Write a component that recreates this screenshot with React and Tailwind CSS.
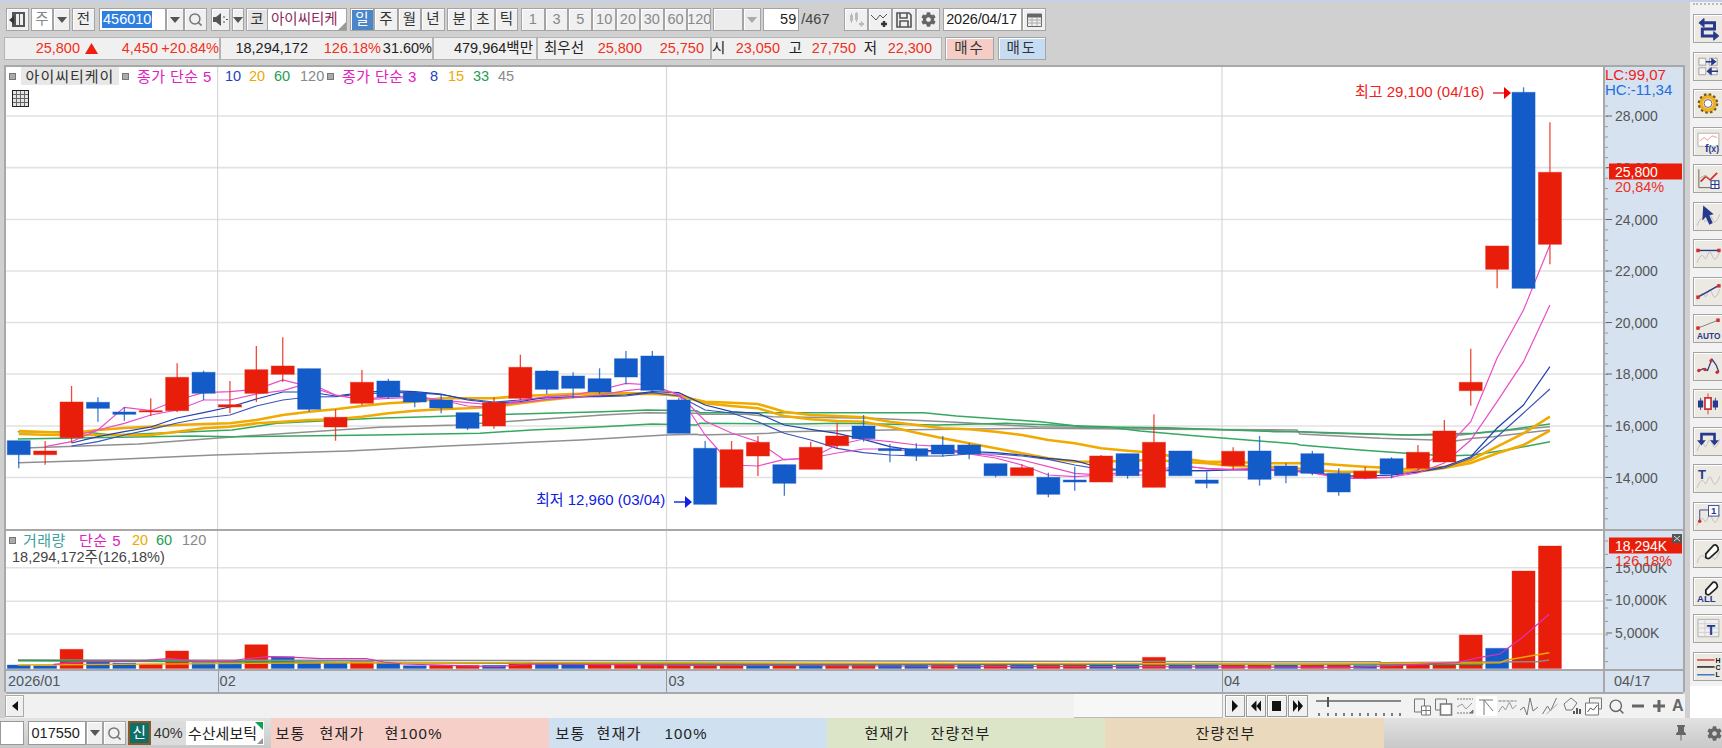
import { Search } from "lucide-react"
import { FaCog } from "react-icons/fa"
import { BsPinFill } from "react-icons/bs"

const RED = "#e81e0a"
const BLUE = "#125bc8"
const cx = (i) => 18.75 + i * 26.4

// [bodyTop, bodyBottom, wickTop, wickBottom, up]
const candles = [
  [440.7, 454.7, 440.7, 468.3, 0], [451, 454.7, 441, 464.7, 1], [402, 437.7, 386, 442.7, 1], [402.3, 408.3, 397.3, 421.7, 0],
  [412, 414.3, 407.3, 420.7, 0], [410.7, 412, 398.3, 416, 1], [377.3, 410.7, 363.3, 412, 1], [372.3, 393.3, 370.7, 400, 0],
  [404.7, 407, 381, 413.3, 1], [369.7, 393.3, 346, 402, 1], [366, 374.3, 337.3, 382, 1], [368.7, 409.3, 368.7, 411.7, 0],
  [417.3, 427, 409.3, 440.7, 1], [382.3, 403.3, 370, 405.3, 1], [381, 397, 378.7, 398.7, 0], [393, 402, 391.3, 407.3, 0],
  [400, 408, 395, 413.3, 0], [412.7, 428.3, 412.7, 430, 0], [402.7, 426, 397.3, 428.7, 1], [367.3, 398.3, 354.7, 400, 1],
  [371, 389.3, 370, 394, 0], [376, 388.3, 372.3, 398.3, 0], [378.7, 392, 368.3, 394, 0], [358.7, 377, 351, 384.3, 0],
  [356, 390.3, 351, 391.7, 0], [400, 433.3, 398, 433.3, 0], [448.3, 504.3, 441, 504.3, 0], [449.7, 487.3, 441, 487.3, 1],
  [442.3, 456, 436, 476, 1], [464.7, 483.3, 464.7, 495.7, 0], [447.3, 469.3, 441.7, 469.3, 1], [436, 445.7, 423.3, 449.3, 1],
  [426, 438.7, 415, 441.7, 0], [448.7, 450.7, 444, 462.3, 0], [448.7, 455.7, 443.3, 461, 0], [445, 454, 436, 456.7, 0],
  [445, 454, 443, 459.3, 0], [463.7, 475.7, 463.7, 477.3, 0], [467.7, 475.7, 464.3, 475.7, 1], [477.3, 494.3, 472.7, 497.3, 0],
  [480, 482, 466.7, 490.7, 0], [456, 482, 455, 482, 1], [453.7, 475.7, 453.7, 478.7, 0], [442.3, 487.3, 414.3, 487.3, 1],
  [451, 475.7, 451, 475.7, 0], [480, 483.3, 471.7, 488.3, 0], [451.3, 465.7, 447.3, 470, 1], [451, 479.3, 436, 485.7, 0],
  [466, 475.7, 463.3, 483.3, 0], [453.7, 473.3, 451, 475.3, 0], [473.3, 492, 468.3, 495.7, 0], [471.3, 478, 466.7, 479.3, 1],
  [458.7, 474, 457.3, 478.3, 0], [452.3, 468.3, 445, 470, 1], [431, 462, 420, 462, 1], [382.3, 390.7, 348.7, 405.7, 1],
  [246, 269.3, 246, 288.3, 1], [92.3, 288.3, 87.3, 288.3, 0], [172.3, 244.3, 122.3, 264.3, 1],
]

// [top, up]
const volumes = [
  [665, 0], [665.7, 0], [649.3, 1], [662, 0], [663, 0], [664, 1], [651, 1], [662.7, 0], [662.7, 0], [644.7, 1],
  [656.7, 0], [662, 0], [663, 0], [661.7, 1], [663.3, 0], [665.7, 0], [665.3, 1], [665.3, 1], [665.3, 0], [662, 1],
  [664, 0], [664, 0], [664, 1], [664, 1], [664, 1], [663, 1], [664, 1], [664, 1], [664, 0], [665, 1],
  [664, 0], [665, 1], [664, 1], [665, 0], [664, 0], [664, 1], [664, 0], [665, 1], [664, 0], [664, 1],
  [664, 1], [664, 0], [664.5, 0], [657.3, 1], [664, 0], [664, 0], [664.5, 1], [664.5, 1], [664.5, 0], [664.5, 1],
  [664.5, 1], [665.5, 0], [664.5, 1], [664.5, 1], [664.5, 1], [635, 1], [648.3, 0], [571, 1], [546, 1],
]

const fastPink = [446.7, 441.7, 430, 407.3, 410.7, 400, 392.7, 391.7, 389.3, 380, 386.7, 395, 399.3, 396.7, 396, 400, 406, 407.3, 400, 396.7, 395, 390, 383.3, 385, 395, 435, 465, 466, 459.3, 458, 445, 439, 441.7, 445, 446.7, 454, 458, 465, 475, 476.7, 475, 471.7, 470, 466, 468.3, 469.3, 468, 470, 471.7, 478.3, 478.3, 477.3, 470, 450, 421.7, 358, 310, 245]
const slowPink = [436.7, 430, 423.3, 415, 410, 400, 400, 394, 390.7, 383, 395, 400, 398.3, 397.3, 400, 402.7, 405, 402.7, 399.3, 397.3, 395, 390.7, 388, 394, 421, 433, 441.7, 460, 458, 453, 449, 449, 451.7, 451.7, 453, 456, 460, 466.7, 473.3, 475, 475, 475, 465, 469, 470, 470, 471, 473, 478, 478, 477, 473, 463, 440, 401.7, 361.7, 305]
const fastBlue = [443, 436.7, 431.7, 427, 418, 412.7, 407, 399, 392, 392, 396, 392.7, 390.7, 391.7, 394, 400, 403, 401.7, 397, 397, 396, 395, 391.7, 392.7, 405, 411.7, 413.3, 425, 429.3, 433.3, 439.3, 446.7, 450.7, 450.7, 451.7, 452.7, 455, 458.3, 460.7, 468, 470, 470, 470.7, 470.7, 469.3, 469.3, 470, 472, 476, 476, 475, 472, 466.7, 456.7, 428, 405, 366.7]
const slowBlue = [446, 441.7, 435, 429.3, 423, 418, 415, 406, 400, 397, 396.7, 394, 392.7, 392.7, 394.7, 399, 402, 400, 398, 397, 396.7, 396, 392.7, 396, 410, 413, 421.7, 433.3, 440, 448.3, 452.7, 455, 456, 456, 454, 454, 456, 459.3, 465, 469.3, 470.7, 470.7, 470.7, 470.7, 470, 470, 470, 473, 476, 476, 475, 472, 468, 458, 436.7, 413, 389]
const orangeUp = [431, 432, 433, 430, 428, 426.7, 425, 424, 423.3, 420, 415, 411.7, 409.3, 406, 403.3, 401.7, 398.3, 398.3, 398.3, 396, 395, 394, 393.3, 393.3, 393.3, 396, 401.7, 402.7, 404, 411.7, 415, 416, 417.3, 421.7, 425, 428.3, 429.3, 431.7, 435, 440, 443.3, 448.3, 450.7, 452.7, 458.3, 461.7, 461.7, 463.3, 463.3, 463, 465, 466.7, 468, 470, 466.7, 460, 446.7, 433.3, 416.7]
const orangeLow = [434, 434.7, 435, 435, 435, 435, 431.7, 428.3, 426.7, 423.3, 421.7, 420, 419.3, 416.7, 413.3, 410.7, 409.3, 408.3, 406.7, 403.3, 400, 397.3, 395, 394, 394, 395, 403.3, 406, 408.3, 416, 419.3, 421, 421.7, 426.7, 432.7, 438.3, 443.3, 448.3, 453.3, 458.3, 461.7, 461.7, 460.7, 460, 461.7, 463.3, 466, 466.7, 467.3, 470, 471.7, 471.7, 471.7, 471.7, 468, 463, 453.3, 445, 430.7]

const series = (arr, start) => arr.map((y, i) => `${cx(i + start).toFixed(1)},${y}`).join(" ")

const zoomA = (pts) => pts.map(([x, y]) => `${(x / 2.24).toFixed(1)},${(320 + y / 3).toFixed(1)}`).join(" ")
const zoomB = (pts) => pts.map(([x, y]) => `${(700 + x / 2.613).toFixed(1)},${(380 + y / 3).toFixed(1)}`).join(" ")
const zoomC = (pts) => pts.map(([x, y]) => `${(1300 + x / 3).toFixed(1)},${(290 + y / 3).toFixed(1)}`).join(" ")
const volA = (pts) => pts.map(([x, y]) => `${(x / 2.24).toFixed(1)},${(520 + y / 3).toFixed(1)}`).join(" ")
const volC = (pts) => pts.map(([x, y]) => `${(1300 + x / 3).toFixed(1)},${(520 + y / 3).toFixed(1)}`).join(" ")

const green1 = [
  zoomA([[40, 335], [187, 335], [250, 345], [350, 340], [520, 330], [620, 310], [840, 295], [960, 290], [1140, 283], [1350, 275], [1450, 270], [1560, 272]]),
  zoomB([[0, 98], [585, 98], [670, 108], [890, 125], [1000, 140], [1220, 143], [1500, 155]]),
  zoomC([[0, 425], [320, 435], [520, 430], [620, 420], [750, 402]]),
].join(" ")
const green2 = [
  zoomA([[40, 357], [430, 348], [520, 350], [840, 345], [1075, 340], [1190, 330], [1350, 320], [1460, 312], [1560, 315]]),
  zoomB([[0, 130], [260, 132], [360, 130], [620, 135], [800, 130], [1060, 140], [1150, 153], [1300, 168], [1560, 192]]),
  zoomC([[0, 465], [180, 480], [320, 490], [440, 498], [520, 495], [620, 480], [750, 455]]),
].join(" ")
const gray1 = [
  zoomA([[40, 385], [310, 372], [550, 348], [850, 322], [1020, 315], [1130, 305], [1350, 285], [1450, 278], [1560, 280]]),
  zoomB([[0, 103], [120, 103], [190, 110], [450, 115], [670, 127], [880, 140], [1200, 145], [1500, 152]]),
  zoomC([[0, 425], [80, 430], [320, 435], [480, 435], [580, 425], [750, 410]]),
].join(" ")
const gray2 = [
  zoomA([[40, 428], [190, 422], [480, 405], [780, 393], [1000, 378], [1300, 360], [1490, 345], [1560, 343]]),
  zoomB([[0, 165], [180, 160], [220, 155], [490, 150], [880, 145], [1200, 148], [1560, 150]]),
  zoomC([[0, 432], [240, 445], [470, 452], [520, 445], [580, 440], [750, 420]]),
].join(" ")

const priceGrid = [116, 167.6, 219.5, 271, 322.5, 374, 426, 477.5]
const volumeGrid = [567.7, 601.3, 634]
const monthLines = [217.6, 666.5, 1222]

const Btn = ({ className = "", tone = "bg-[#f0f0f0] text-[#333]", children }) => (
  <div className={`flex items-center justify-center shrink-0 h-full border border-[#a4a4a4] shadow-[inset_1px_1px_0_#fff] overflow-hidden ${tone} ${className}`}>
    {children}
  </div>
)

const Arrow = ({ color = "#555" }) => (
  <svg width="10" height="6" viewBox="0 0 10 6"><path d="M0 0h10L5 6z" fill={color} /></svg>
)

const Gap = ({ className }) => <div className={`shrink-0 ${className}`} />

const Sq = ({ className = "" }) => <span className={`shrink-0 w-[7px] h-[7px] bg-[#aaa] border border-[#777] ${className}`} />

const Price = ({ className = "", children }) => (
  <span className={`shrink-0 text-right whitespace-nowrap ${className}`}>{children}</span>
)

const Segment = ({ className = "", children }) => (
  <div className={`flex items-center shrink-0 h-full bg-[#f0f0f0] border border-[#b4b4b4] ${className}`}>{children}</div>
)

const Wave = () => <path d="M2 25 C6 14 9 16 11 20 S15 8 18 14 S22 27 28 12" fill="none" stroke="#b8b8b8" />

const navy = "#26398c"

const sideIcons = [
  <g key="0" fill="none" stroke={navy} strokeWidth="3.4"><path d="M10 8h12v7H8v8h14" /><path d="M10 3l-6 5 6 5z" fill={navy} strokeWidth="1" /><path d="M21 18l6 5-6 5z" fill={navy} strokeWidth="1" /></g>,
  <g key="1"><path d="M4 5h8v8H4zM4 16h8v8H4zM16 5h9v8h-9zM16 16h9v8h-9z" fill="#f4f4f4" stroke="#999" /><path d="M12 9h10M19 6l4 3-4 3z" stroke={navy} strokeWidth="1.6" fill={navy} /><path d="M26 20H15M18 17l-4 3 4 3z" stroke={navy} strokeWidth="1.6" fill={navy} /></g>,
  <g key="2"><circle cx="14.5" cy="14.5" r="8" fill="none" stroke="#f0b020" strokeWidth="4.4" /><circle cx="14.5" cy="14.5" r="10.6" fill="none" stroke="#6a5a20" strokeWidth="2.4" strokeDasharray="3 2.6" /><circle cx="14.5" cy="14.5" r="4.5" fill="#fff" stroke="#555" /></g>,
  <g key="3"><path d="M3 5h24v15H3z" fill="#fff" stroke="#aaa" /><path d="M5 14l5-4 4 3 5-5 6 2" fill="none" stroke="#e88" /><text x="11" y="26" className="text-[12px] fill-[#26398c] font-bold">f</text><text x="15" y="26" className="text-[10px] fill-[#26398c] font-bold">(x)</text></g>,
  <g key="4"><path d="M4 4v21h24" fill="none" stroke="#555" /><path d="M6 18l6-6 5 4 8-8" fill="none" stroke="#d03030" strokeWidth="2" /><path d="M5 14l6-3 6 4" fill="none" stroke="#aaa" /><path d="M18 17h9v9h-9zM22.5 17v9M18 21.5h9" fill="#fff" stroke={navy} strokeWidth="1.2" /></g>,
  <g key="5"><Wave /><path d="M9 2l12 10-5 1 4 9-4 2-4-9-4 4z" fill={navy} /></g>,
  <g key="6"><Wave /><path d="M3 11h23" stroke={navy} strokeWidth="1.6" /><rect x="1" y="9" width="4" height="4" fill="#d03030" /><rect x="25" y="9" width="4" height="4" fill="#d03030" /></g>,
  <g key="7"><Wave /><path d="M3 21L26 8" stroke={navy} strokeWidth="1.6" /><rect x="1" y="19" width="4" height="4" fill="#d03030" /><rect x="25" y="6" width="4" height="4" fill="#d03030" /></g>,
  <g key="8"><path d="M3 14L26 5" stroke="#777" /><rect x="1" y="12" width="4" height="4" fill="#d03030" /><rect x="24" y="3" width="4" height="4" fill="#d03030" /><text x="2" y="27" className="text-[9.5px] fill-[#26398c] font-bold">AUTO</text></g>,
  <g key="9"><path d="M3 20l6-3 5 2 5-13 5 7 3 8" fill="none" stroke={navy} strokeWidth="1.4" /><g fill="#d03030"><circle cx="4" cy="19" r="2" /><circle cx="11" cy="18" r="2" /><circle cx="18" cy="8" r="2" /><circle cx="25" cy="21" r="2" /></g></g>,
  <g key="10"><path d="M6 8v14M23 8v14" stroke={navy} /><path d="M3 11h6v8H3zM20 11h6v8h-6z" fill={navy} /><path d="M14.5 3v24" stroke="#d03030" /><path d="M11 8h7v13h-7z" fill="#fff" stroke="#d03030" strokeWidth="2" /></g>,
  <g key="11"><Wave /><path d="M7 14V6h15v8" fill="none" stroke={navy} strokeWidth="3" /><path d="M2 13h10l-5 6zM17 13h10l-5 6z" fill={navy} /></g>,
  <g key="12"><Wave /><text x="3" y="15" className="text-[15px] fill-[#26398c] font-bold">T</text></g>,
  <g key="13"><Wave /><path d="M5 19V7h10" fill="none" stroke={navy} /><circle cx="5" cy="20" r="2" fill="#d03030" /><rect x="15" y="2" width="12" height="12" fill="#fff" stroke={navy} /><text x="18" y="12" className="text-[11px] fill-[#26398c] font-bold">1</text></g>,
  <g key="14"><Wave /><path d="M12 15l9-10q2-1 4 1l1 2q1 2-1 4l-9 8q-2 1-4-1z" fill="#fff" stroke="#222" strokeWidth="2" /></g>,
  <g key="15"><path d="M12 13l8-9q2-1 4 1l1 2q1 2-1 4l-8 7q-2 1-4-1z" fill="#fff" stroke="#222" strokeWidth="2" /><text x="2" y="27" className="text-[11px] fill-[#26398c] font-bold">ALL</text></g>,
  <g key="16"><path d="M3 4h24v20H3z" fill="#f0f0f0" stroke="#aaa" /><path d="M3 9h24M3 14h24M3 19h24M11 4v20" stroke="#ccc" /><text x="13" y="22" className="text-[16px] fill-[#26398c] font-bold">T</text></g>,
  <g key="17"><path d="M2 7h20" stroke="#d03030" strokeWidth="1.6" /><path d="M2 15h20" stroke="#111" strokeWidth="1.6" /><path d="M2 24h20" stroke="#3070d0" strokeWidth="1.6" /><text x="23" y="10" className="text-[8px] fill-[#111] font-bold">H</text><text x="23" y="18" className="text-[8px] fill-[#111] font-bold">C</text><text x="23" y="27" className="text-[8px] fill-[#111] font-bold">L</text></g>,
]

const PlotLine = ({ points, stroke, width = 1.2 }) => (
  <polyline points={points} fill="none" stroke={stroke} strokeWidth={width} />
)

const GridLines = ({ rows, x2 = 1603 }) => (
  <g stroke="#e2e2e2" strokeWidth="1.6">
    {rows.map((y) => <line key={y} x1="6" x2={x2} y1={y} y2={y} />)}
  </g>
)

const MonthLines = ({ top, bottom }) => (
  <g stroke="#d8d8d8" strokeWidth="1.2">
    {monthLines.map((x) => <line key={x} x1={x} x2={x} y1={top} y2={bottom} />)}
  </g>
)

const MainPlot = () => (
  <svg className="block w-[1597px] h-[462px]" viewBox="6 67 1597 462">
    <GridLines rows={priceGrid} />
    <MonthLines top={67} bottom={529} />
    <PlotLine points={gray2} stroke="#909090" width={1.5} />
    <PlotLine points={gray1} stroke="#909090" width={1.5} />
    <PlotLine points={green2} stroke="#35a860" width={1.5} />
    <PlotLine points={green1} stroke="#35a860" width={1.5} />
    <PlotLine points={series(orangeLow, 0)} stroke="#f0aa00" width={2.6} />
    <PlotLine points={series(orangeUp, 0)} stroke="#f0aa00" width={2.6} />
    <PlotLine points={series(slowBlue, 2)} stroke="#3a55b8" />
    <PlotLine points={series(fastBlue, 2)} stroke="#2040b0" />
    <PlotLine points={series(slowPink, 2)} stroke="#ea4cc8" />
    <PlotLine points={series(fastPink, 1)} stroke="#ea4cc8" />
    {candles.map(([top, bottom, wickTop, wickBottom, up], i) => {
      const color = up ? RED : BLUE
      return (
        <g key={i}>
          <line x1={cx(i)} x2={cx(i)} y1={wickTop} y2={wickBottom} stroke={color} strokeOpacity="0.8" strokeWidth="1.3" />
          <rect x={cx(i) - 11.5} y={top} width="23" height={bottom - top} fill={color} stroke={color} strokeOpacity="0.45" />
        </g>
      )
    })}
    <text x="1355" y="97" className="text-[15px] fill-[#f02020]">최고 29,100 (04/16)</text>
    <path d="M1493 93h12" stroke="#f02020" strokeWidth="1.4" />
    <path d="M1504 87l7 6-7 6z" fill="#f00000" />
    <text x="536" y="505" className="text-[15px] fill-[#1020e0]">최저 12,960 (03/04)</text>
    <path d="M674 502h12" stroke="#1020e0" strokeWidth="1.4" />
    <path d="M685 496l7 6-7 6z" fill="#1020e0" />
  </svg>
)

const axisRows = [
  ["28,000", 116], ["26,000", 167.6], ["24,000", 219.5], ["22,000", 271], ["20,000", 322.5], ["18,000", 374], ["16,000", 426], ["14,000", 477.5],
]

const MainAxis = () => {
  const minor = []
  for (let y = 106; y < 529; y += 10.32) minor.push(y)
  return (
    <svg className="block w-[78px] h-[462px]" viewBox="1605 67 78 462">
      <g stroke="#9a9a9a">
        {minor.map((y) => <line key={y} x1="1605" x2="1608" y1={y} y2={y} />)}
      </g>
      {axisRows.map(([label, y]) => (
        <g key={label}>
          <line x1="1606" x2="1612" y1={y} y2={y} stroke="#666" />
          <text x="1615" y={y + 5} className="text-[14px] fill-[#555]">{label}</text>
        </g>
      ))}
      <text x="1605" y="80" className="text-[15px] fill-[#f02020]">LC:99,07</text>
      <text x="1605" y="95" className="text-[15px] fill-[#2070e0]">HC:-11,34</text>
      <rect x="1609" y="163.5" width="73" height="16" fill={RED} />
      <text x="1615" y="176.5" className="text-[14px] fill-white">25,800</text>
      <text x="1615" y="192" className="text-[14.5px] fill-[#f03020]">20,84%</text>
    </svg>
  )
}

const VolumePlot = () => (
  <svg className="block w-[1597px] h-[138px]" viewBox="6 531 1597 138">
    <GridLines rows={volumeGrid} />
    <MonthLines top={531} bottom={669} />
    {volumes.map(([top, up], i) => (
      <rect key={i} x={cx(i) - 11.5} y={top} width="23" height={668.5 - top} fill={up ? RED : BLUE} stroke={up ? RED : BLUE} strokeOpacity="0.35" />
    ))}
    <PlotLine points={volA([[40, 420], [1560, 422]]) + " " + volC([[0, 425], [240, 425], [240, 428], [710, 425], [748, 420]])} stroke="#8a8a8a" width={1.5} />
    <PlotLine points={volA([[40, 422], [1560, 432]]) + " " + volC([[0, 433], [550, 432]])} stroke="#2f9a55" width={1.8} />
    <PlotLine points={volA([[40, 435], [780, 428], [1560, 428]]) + " " + volC([[0, 432], [600, 428], [620, 420], [748, 398]])} stroke="#f0aa00" width={1.4} />
    <PlotLine points={volA([[120, 433], [190, 425], [250, 425], [310, 423], [380, 415], [440, 424], [520, 424], [545, 417], [600, 410], [660, 412], [720, 416], [820, 416], [860, 426], [900, 432], [1030, 437], [1110, 440], [1190, 432], [1560, 436]]) + " " + volC([[160, 442], [470, 428], [540, 412], [600, 402], [670, 350], [710, 315], [748, 282]])} stroke="#e030b0" />
  </svg>
)

const VolumeAxis = () => {
  const minor = []
  for (let y = 541; y < 669; y += 13.4) minor.push(y)
  return (
    <svg className="block w-[78px] h-[138px]" viewBox="1605 531 78 138">
      <g stroke="#9a9a9a">
        {minor.map((y) => <line key={y} x1="1605" x2="1608" y1={y} y2={y} />)}
      </g>
      {[["15,000K", 567.5], ["10,000K", 600], ["5,000K", 633]].map(([label, y]) => (
        <g key={label}>
          <line x1="1606" x2="1612" y1={y} y2={y} stroke="#666" />
          <text x="1615" y={y + 5} className="text-[14px] fill-[#555]">{label}</text>
        </g>
      ))}
      <rect x="1609" y="537.5" width="73" height="16" fill={RED} />
      <text x="1615" y="550.5" className="text-[14px] fill-white">18,294K</text>
      <text x="1615" y="565.5" className="text-[14.5px] fill-[#f03020]">126,18%</text>
      <rect x="1672" y="534" width="10" height="9" fill="#555" />
      <path d="M1674 536l6 5M1680 536l-6 5" stroke="#ddd" />
    </svg>
  )
}

const MiniIcon = ({ children, className = "" }) => (
  <svg width="20" height="20" viewBox="0 0 20 20" className={`shrink-0 ${className}`} fill="none" stroke="#777">{children}</svg>
)

const scrollIcons = [
  <MiniIcon key="0" className="w-[21px]"><path d="M2 3h10v13H2z" /><path d="M9 10h9v9H9zM13.5 10v9M9 14.5h9" fill="#fff" /></MiniIcon>,
  <MiniIcon key="1" className="w-[21px]"><path d="M2 3h11v11H2z" /><path d="M7 8h11v11H7z" fill="#fff" strokeWidth="1.6" /></MiniIcon>,
  <MiniIcon key="2" className="w-[22px]"><path d="M2 3h16M2 17h16" strokeDasharray="2 1" /><path d="M2 11l5-3 4 5 6-6" stroke="#999" /><path d="M18 14l-3 3h3z" fill="#777" /></MiniIcon>,
  <div key="3" className="w-[21px] h-[20px] bg-white flex items-center justify-center"><MiniIcon><path d="M7 4v15M2 4h14M7 4l9 11" /></MiniIcon></div>,
  <MiniIcon key="4" className="w-[21px]"><path d="M1 5h18" strokeDasharray="3 1" /><path d="M1 16l4-6 3 4 4-8 3 7 4-4" stroke="#999" /></MiniIcon>,
  <MiniIcon key="5" className="w-[22px]"><path d="M1 14l4-3 3 8 3-17 3 13 5-4" /></MiniIcon>,
  <MiniIcon key="6" className="w-[21px]"><path d="M2 18l5-8 3 5 6-13" /><path d="M6 18L17 8" stroke="#aaa" /></MiniIcon>,
  <MiniIcon key="7" className="w-[22px]"><path d="M2 8l7-6 6 5-5 7H4z" /><path d="M12 18v-3M15 18v-6M18 18v-5" strokeWidth="2" stroke="#555" /></MiniIcon>,
  <MiniIcon key="8" className="w-[21px]"><path d="M6 2h12v11H6z" /><path d="M2 7h13v12H2z" fill="#fff" /><path d="M4 16l3-4 3 2 4-5" stroke="#555" /></MiniIcon>,
]

const App = () => (
  <div className="w-[1722px] h-[748px] overflow-hidden flex flex-col bg-[#d0d0d0] text-[14.5px] leading-none text-[#222] font-['Liberation_Sans','Noto_Sans_CJK_KR',sans-serif]">
    <div className="h-[2px] shrink-0 bg-[#c3d0e6]" />

    <div className="flex h-[716px] shrink-0">
      <div className="w-[1690px] shrink-0 flex flex-col">
        {/* toolbar, first row */}
        <div className="flex h-[23px] mt-[6px] ml-[6px] shrink-0">
          <Btn className="w-[23px]">
            <svg width="17" height="17" viewBox="0 0 17 17"><path d="M3 1h13v15H3z" fill="#555" /><path d="M7 3h3v11H7zM11 3h3v11h-3z" fill="#eee" /><path d="M0 9l5-4v8z" fill="#333" /></svg>
          </Btn>
          <Gap className="w-[2px]" />
          <Btn className="w-[22px]" tone="bg-white text-[#888]">주</Btn>
          <Btn className="w-[17px]"><Arrow /></Btn>
          <Gap className="w-[2px]" />
          <Btn className="w-[23px]">전</Btn>
          <Gap className="w-[4px]" />
          <div className="w-[67px] shrink-0 h-full bg-white border border-[#a4a4a4] flex items-center pl-[2px]">
            <span className="bg-[#2f7fe0] text-white px-[1px] h-[17px] leading-[17px]">456010</span>
          </div>
          <Btn className="w-[18px]"><Arrow /></Btn>
          <Btn className="w-[23px]"><Search size={15} color="#777" strokeWidth={2.4} /></Btn>
          <Gap className="w-[4px]" />
          <Btn className="w-[19px]">
            <svg width="15" height="15" viewBox="0 0 15 15"><path d="M0 5h3l5-4v13L3 10H0z" fill="#555" /><path d="M10 5h2M10 10h2M13 7.500h2" stroke="#555" /></svg>
          </Btn>
          <Gap className="w-[2px]" />
          <Btn className="w-[12px]"><Arrow /></Btn>
          <Gap className="w-[2px]" />
          <Btn className="w-[22px]" tone="bg-[#e4e4e4] text-[#333]">코</Btn>
          <div className="relative w-[79px] shrink-0 h-full bg-white border-y border-r border-[#a4a4a4] flex items-center pl-[3px] overflow-hidden whitespace-nowrap text-[#8a2a5a] text-[14.5px]">
            아이씨티케
            <span className="absolute right-0 bottom-0 border-l-[8px] border-b-[8px] border-l-transparent border-b-[#999]" />
          </div>
          <Gap className="w-[3px]" />
          <Btn className="w-[24px]" tone="bg-[#4a86c8] text-white">일</Btn>
          <Btn className="w-[23.6px]">주</Btn>
          <Btn className="w-[23.6px]">월</Btn>
          <Btn className="w-[23.6px]">년</Btn>
          <Gap className="w-[2.5px]" />
          <Btn className="w-[23.7px]">분</Btn>
          <Btn className="w-[23.7px]">초</Btn>
          <Btn className="w-[23.7px]">틱</Btn>
          <Gap className="w-[2.5px]" />
          {["1", "3", "5", "10", "20", "30", "60", "120"].map((n) => (
            <Btn key={n} className="w-[23.8px]" tone="bg-[#f0f0f0] text-[#888]">{n}</Btn>
          ))}
          <Gap className="w-[2px]" />
          <Btn className="w-[30px]" tone="bg-[#ececec]" />
          <Btn className="w-[18px]" tone="bg-[#ececec]"><Arrow color="#aaa" /></Btn>
          <Gap className="w-[2px]" />
          <div className="w-[36px] shrink-0 h-full bg-white border border-[#a4a4a4] flex items-center justify-end pr-[2px]">59</div>
          <span className="w-[30px] ml-[2px] mr-[13px] shrink-0 flex items-center text-[#444]">/467</span>
          <Btn className="w-[24px]">
            <svg width="18" height="16" viewBox="0 0 18 16"><path d="M3 3h3v6H3zM8 1h3v7H8z" fill="#bbb" /><path d="M4.500 1v10M9.500 0v10" stroke="#bbb" /><path d="M12 12h5M14.500 9.500v5" stroke="#bbb" strokeWidth="2" /></svg>
          </Btn>
          <Btn className="w-[24px]">
            <svg width="18" height="16" viewBox="0 0 18 16"><path d="M0 3l5 5 4-5 3 3 4-4" fill="none" stroke="#555" /><path d="M10 12h6M13 9v6" stroke="#333" strokeWidth="2.4" /></svg>
          </Btn>
          <Btn className="w-[24px]">
            <svg width="16" height="16" viewBox="0 0 16 16" fill="none" stroke="#555" strokeWidth="1.6"><path d="M1 1h12l2 2v12H1z" /><path d="M4 1v5h7V1M4 15V9h8v6" /></svg>
          </Btn>
          <Btn className="w-[24px]"><FaCog size={15} color="#666" /></Btn>
          <Gap className="w-[3px]" />
          <div className="w-[79px] shrink-0 h-full bg-white border border-[#a4a4a4] flex items-center pl-[2px] tracking-[-0.2px]">2026/04/17</div>
          <Btn className="w-[24px]">
            <svg width="15" height="14" viewBox="0 0 15 14" fill="none" stroke="#666"><path d="M.5 2.500h14v11H.5z" /><path d="M.5 1h14v3H.5z" fill="#666" /><path d="M.5 7h14M.5 10h14M5 4v9M10 4v9" stroke="#aaa" /></svg>
          </Btn>
        </div>

        {/* toolbar, second row */}
        <div className="flex h-[23px] mt-[6px] ml-[4px] shrink-0">
          <Segment className="w-[216px] text-[#f03020]">
            <Price className="w-[75px]">25,800</Price>
            <svg width="13" height="11" viewBox="0 0 13 11" className="ml-[5px] shrink-0"><path d="M6.500 0L13 11H0z" fill="#f02010" /></svg>
            <Price className="w-[60px]">4,450</Price>
            <Price className="w-[61px]">+20.84%</Price>
          </Segment>
          <Segment className="w-[213px]">
            <Price className="w-[87px] text-[#222]">18,294,172</Price>
            <Price className="w-[73px] text-[#f03020]">126.18%</Price>
            <Price className="w-[51px] text-[#222]">31.60%</Price>
          </Segment>
          <Segment className="w-[104px]">
            <Price className="w-[99px]">479,964백만</Price>
          </Segment>
          <Segment className="w-[174px]">
            <Price className="w-[46px]">최우선</Price>
            <Price className="w-[58px] text-[#f03020]">25,800</Price>
            <Price className="w-[62px] text-[#f03020]">25,750</Price>
          </Segment>
          <Segment className="w-[231px]">
            <Price className="w-[13px]">시</Price>
            <Price className="w-[55px] text-[#f03020]">23,050</Price>
            <Price className="w-[22px]">고</Price>
            <Price className="w-[54px] text-[#f03020]">27,750</Price>
            <Price className="w-[21px]">저</Price>
            <Price className="w-[55px] text-[#f03020]">22,300</Price>
          </Segment>
          <Gap className="w-[3px]" />
          <Btn className="w-[49px] tracking-[2px]" tone="bg-[#f5cdc5] text-[#333]">매수</Btn>
          <Gap className="w-[3.500px]" />
          <Btn className="w-[48.500px] tracking-[2px]" tone="bg-[#c5dcf2] text-[#333]">매도</Btn>
        </div>

        {/* chart */}
        <div className="w-[1681px] ml-[4px] mt-[5px] flex flex-col bg-white border-x-2 border-t-2 border-[#a8a8a8] shrink-0">
          <div className="flex h-[464px] border-b-2 border-[#a8a8a8]">
            <div className="relative w-[1597px] shrink-0">
              <MainPlot />
              <div className="absolute left-[3px] top-0 flex items-center h-[18px] whitespace-nowrap">
                <Sq />
                <span className="ml-[5px] w-[98px] h-[18px] flex items-center justify-center bg-[#e8e8e8] text-[#333] text-[15px] tracking-[1px]">아이씨티케이</span>
                <Sq className="ml-[3px]" />
                <span className="ml-[8px] w-[77px] text-[#e020c0] text-[15px] tracking-[0.4px]">종가 단순 5</span>
                <span className="ml-[11px] w-[14px] text-[#2040c0]">10</span>
                <span className="ml-[10px] w-[15px] text-[#f0a800]">20</span>
                <span className="ml-[10px] w-[15px] text-[#20a050]">60</span>
                <span className="ml-[11px] w-[21px] text-[#888]">120</span>
                <Sq className="ml-[6px]" />
                <span className="ml-[8px] w-[77px] text-[#e020c0] text-[15px] tracking-[0.4px]">종가 단순 3</span>
                <span className="ml-[11px] w-[6px] text-[#2040c0]">8</span>
                <span className="ml-[12px] w-[13px] text-[#f0a800]">15</span>
                <span className="ml-[12px] w-[14px] text-[#20a050]">33</span>
                <span className="ml-[11px] w-[13px] text-[#888]">45</span>
              </div>
              <div className="absolute left-[6px] top-[23px] w-[17px] h-[17px] bg-[#e4e4e4] border border-[#222]">
                <svg width="15" height="15" viewBox="0 0 15 15" fill="none" stroke="#666"><path d="M0 3.500h15M0 7.500h15M0 11.500h15M3.500 0v15M7.500 0v15M11.500 0v15" /></svg>
              </div>
            </div>
            <div className="bg-[#d6e2f0] border-l-2 border-[#a8a8a8] shrink-0">
              <MainAxis />
            </div>
          </div>

          <div className="flex h-[140px] border-b-2 border-[#a8a8a8]">
            <div className="relative w-[1597px] shrink-0">
              <VolumePlot />
              <div className="absolute left-[3px] top-[2px] flex flex-col gap-[3px] whitespace-nowrap">
                <div className="flex items-center h-[14px]">
                  <Sq />
                  <span className="ml-[7px] w-[46px] text-[#40a0a0] text-[15px] tracking-[0.5px]">거래량</span>
                  <span className="ml-[10px] w-[42px] text-[#e020c0] text-[15px] tracking-[0.5px]">단순 5</span>
                  <span className="ml-[11px] w-[14px] text-[#f0a800]">20</span>
                  <span className="ml-[10px] w-[16px] text-[#20a050]">60</span>
                  <span className="ml-[10px] w-[22px] text-[#888]">120</span>
                </div>
                <span className="ml-[3px] text-[#444]">18,294,172주(126,18%)</span>
              </div>
            </div>
            <div className="bg-[#d6e2f0] border-l-2 border-[#a8a8a8] shrink-0">
              <VolumeAxis />
            </div>
          </div>

          {/* date axis */}
          <div className="flex h-[21px] bg-[#d6e2f0] text-[#555] border-b-2 border-[#a8a8a8] box-content items-stretch -mb-[2px]">
            <div className="w-[211.600px] shrink-0 flex items-center pl-[2px]">2026/01</div>
            <div className="w-[448.900px] shrink-0 flex items-center pl-[1px] border-l border-[#999]">02</div>
            <div className="w-[555.500px] shrink-0 flex items-center pl-[1px] border-l border-[#999]">03</div>
            <div className="w-[381px] shrink-0 flex items-center pl-[1px] border-l border-[#999]">04</div>
            <div className="flex-1 flex items-center pl-[9px] border-l-2 border-[#a8a8a8]">04/17</div>
          </div>
        </div>

        {/* scroll and tools */}
        <div className="flex items-center w-[1680px] ml-[5px] h-[24px] mt-[2px] bg-[#f2f2f2] shrink-0">
          <div className="w-[19px] h-[22px] shrink-0 flex items-center justify-center bg-[#f0f0f0] border border-[#aaa] shadow-[inset_1px_1px_0_#fff]">
            <svg width="6" height="10" viewBox="0 0 6 10"><path d="M6 0v10L0 5z" fill="#111" /></svg>
          </div>
          <div className="w-[1050px] h-full shrink-0 bg-[#f1f1f1]" />
          <div className="w-[149px] h-full shrink-0 bg-[#f7f7f7] border-b border-r border-[#bbb]" />
          <div className="flex h-[22px] shrink-0 ml-[2px] gap-[1px]">
            {["M2 0v12l6-6z", "M8 0v12L3 6zM3 0v12L-3 6z", "M0 1h9v10H0z", "M0 0v12l5-6zM5 0v12l5-6z"].map((d, i) => (
              <div key={i} className="w-[20px] h-full flex items-center justify-center bg-[#f0f0f0] border border-[#999] shadow-[inset_1px_1px_0_#fff]">
                <svg width="10" height="12" viewBox={i === 1 ? "-3 0 11 12" : "0 0 10 12"}><path d={d} fill="#111" /></svg>
              </div>
            ))}
          </div>
          <svg width="86" height="22" viewBox="0 0 86 22" className="ml-[8px] shrink-0">
            <path d="M0 6h85" stroke="#888" strokeWidth="2" />
            <path d="M12 2v10" stroke="#555" strokeWidth="2" />
            <g stroke="#555" strokeWidth="1.500">
              {[3, 12, 20, 28, 36, 44, 52, 60, 68, 76, 84].map((x) => <line key={x} x1={x} x2={x} y1="18" y2="21" />)}
            </g>
          </svg>
          <div className="flex items-center ml-[10px]">{scrollIcons}</div>
          <div className="flex items-center ml-[4px] text-[#666] gap-[5px]">
            <Search size={17} strokeWidth={2} className="shrink-0" />
            <svg width="16" height="16" viewBox="0 0 16 16"><path d="M2 8h12" stroke="#666" strokeWidth="3" /></svg>
            <svg width="16" height="16" viewBox="0 0 16 16"><path d="M2 8h12M8 2v12" stroke="#666" strokeWidth="3" /></svg>
            <span className="font-bold text-[16px]">A</span>
          </div>
        </div>
      </div>

      {/* right tool strip */}
      <div className="flex-1 min-w-0 bg-white flex flex-col overflow-hidden">
        <div className="bg-[#f2f2f2] h-[684px] shrink-0 pl-[3px] flex flex-col">
          <div className="h-[4px] mt-[1px] mb-[7px] border-t-2 border-dotted border-[#bbb] shrink-0" />
          <div className="flex flex-col gap-[8.500px]">
            {sideIcons.map((icon, i) => (
              <div key={i} className="w-[31px] h-[29px] shrink-0 bg-[#ece9e2] border border-[#a4a4a4] shadow-[inset_1px_1px_0_#fff]">
                <svg width="28" height="27" viewBox="-1 -1 31 31">{icon}</svg>
              </div>
            ))}
          </div>
        </div>
      </div>
    </div>

    {/* bottom order bar */}
    <div className="flex items-stretch h-[30px] shrink-0 bg-linear-to-b from-[#e2e2e2] to-[#c8c8c8]">
      <div className="flex items-center h-[24px] mt-[3px] shrink-0">
        <div className="w-[24px] h-full bg-white border border-[#999]" />
        <Gap className="w-[3.500px]" />
        <div className="w-[58.500px] h-full shrink-0 bg-white border border-[#999] flex items-center pl-[3px]">017550</div>
        <Btn className="w-[17px]"><Arrow /></Btn>
        <Btn className="w-[23px]"><Search size={15} color="#777" strokeWidth={2.4} /></Btn>
        <Gap className="w-[2px]" />
        <div className="w-[22.500px] h-full shrink-0 bg-[#0e6e68] border-2 border-[#8b5a2b] text-white flex items-center justify-center">신</div>
        <div className="w-[35.500px] h-full shrink-0 bg-[#dcdcdc] flex items-center justify-center text-[#333]">40%</div>
        <div className="relative w-[78px] h-full shrink-0 bg-white flex items-center pl-[2px] overflow-hidden whitespace-nowrap text-[15px]">
          수산세보틱
          <span className="absolute right-[1px] top-[1px] border-r-[8px] border-b-[8px] border-r-[#10a050] border-b-transparent" />
          <span className="absolute right-[1px] bottom-[1px] border-l-[6px] border-b-[6px] border-l-transparent border-b-[#999]" />
        </div>
      </div>
      <Gap className="w-[6.500px]" />
      <div className="w-[278px] shrink-0 bg-[#f5cfc8] flex items-center pl-[5px] whitespace-nowrap text-[15px] tracking-[1.2px]">
        <span className="w-[44px]">보통</span><span className="w-[65px]">현재가</span><span>현100%</span>
      </div>
      <div className="w-[278px] shrink-0 bg-[#cfe0f0] flex items-center pl-[7px] whitespace-nowrap text-[15px] tracking-[1.2px]">
        <span className="w-[41px]">보통</span><span className="w-[68px]">현재가</span><span>100%</span>
      </div>
      <div className="w-[278px] shrink-0 bg-[#dde5c8] flex items-center pl-[38px] whitespace-nowrap text-[15px] tracking-[1.2px]">
        <span className="w-[66px]">현재가</span><span>잔량전부</span>
      </div>
      <div className="w-[279px] shrink-0 bg-[#ead9bc] flex items-center pl-[91px] whitespace-nowrap text-[15px] tracking-[1.2px]">잔량전부</div>
      <div className="flex-1 flex items-center justify-end gap-[18px] pr-[0px] text-[#666]">
        <BsPinFill size={16} className="shrink-0" />
        <FaCog size={15} className="shrink-0" />
      </div>
    </div>
  </div>
)

export default App
